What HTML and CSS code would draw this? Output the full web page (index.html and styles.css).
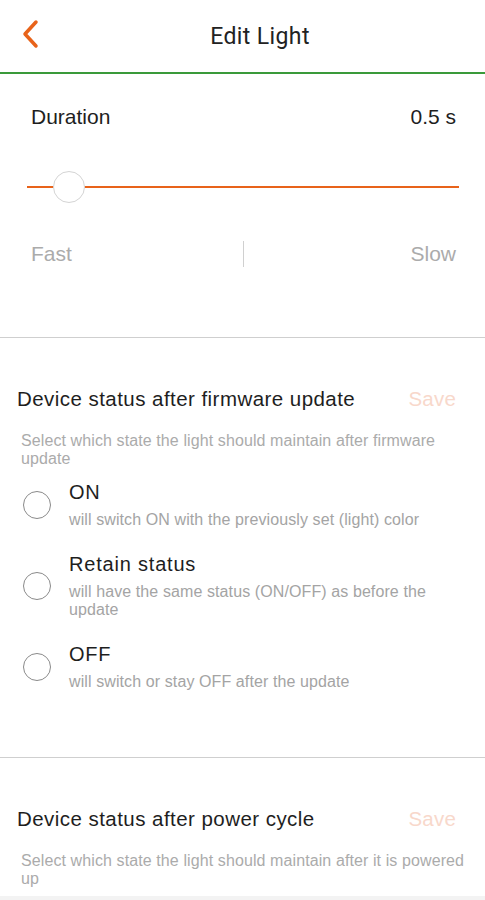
FILE: index.html
```html
<!DOCTYPE html>
<html>
	<head>
		<link rel="stylesheet" href="styles.css">
	</head>
	<body>
		<div class="header">
			<div class="back">
				<svg width="20" height="30" viewBox="0 0 20 30">
					<polyline points="15,3 4,15 15,27" fill="none" stroke="#e8631a" stroke-width="3.5" stroke-linecap="round" stroke-linejoin="round"/>
				</svg>
			</div>
			<div class="title">Edit Light</div>
		</div>

		<div class="duration">
			<div class="row">
				<span>Duration</span>
				<span>0.5 s</span>
			</div>
			<div class="slider">
				<div class="track"></div>
				<div class="thumb"></div>
			</div>
			<div class="scale">
				<span>Fast</span>
				<span class="tick"></span>
				<span class="slow">Slow</span>
			</div>
		</div>

		<div class="section">
			<div class="section-head">
				<span>Device status after firmware update</span>
				<span class="save">Save</span>
			</div>
			<div class="hint">Select which state the light should maintain after firmware update</div>
			<div class="options">
				<div class="option">
					<span class="radio"></span>
					<div class="option-text">
						<div class="option-name">ON</div>
						<div class="option-desc">will switch ON with the previously set (light) color</div>
					</div>
				</div>
				<div class="option">
					<span class="radio"></span>
					<div class="option-text">
						<div class="option-name">Retain status</div>
						<div class="option-desc">will have the same status (ON/OFF) as before the update</div>
					</div>
				</div>
				<div class="option">
					<span class="radio"></span>
					<div class="option-text">
						<div class="option-name">OFF</div>
						<div class="option-desc">will switch or stay OFF after the update</div>
					</div>
				</div>
			</div>
		</div>

		<div class="section last">
			<div class="section-head">
				<span>Device status after power cycle</span>
				<span class="save">Save</span>
			</div>
			<div class="hint">Select which state the light should maintain after it is powered up</div>
		</div>
		<div class="bottom"></div>
	</body>
</html>
```

FILE: styles.css
```css
*{
	margin: 0;
	padding: 0;
	box-sizing: border-box;
}
html,body{
	width: 100%;
	height: 100%;
	overflow: hidden;
}
body{
	font-family: "Liberation Sans", Arial, sans-serif;
	color: #1e1e1e;
	background: #fff;
}
.header{
	display: flex;
	align-items: center;
	height: 74px;
	border-bottom: 2px solid #3a9a3a;
}
.back{
	width: 50px;
	padding-left: 21px;
	padding-bottom: 5px;
	display: flex;
	align-items: center;
}
.title{
	flex: 1;
	text-align: center;
	padding-right: 15px;
	font-family: Roboto, sans-serif;
	font-size: 23px;
	letter-spacing: 0.4px;
	color: #222;
}
.duration{
	padding: 31px 29px 0 31px;
	border-bottom: 1.5px solid #cfcfcf;
	height: 264px;
	font-size: 21px;
}
.row{
	display: flex;
	justify-content: space-between;
	align-items: center;
	line-height: 24px;
}
.slider{
	position: relative;
	height: 32px;
	margin: 42px -3px 0 -4px;
	display: flex;
	align-items: center;
}
.track{
	flex: 1;
	height: 2.5px;
	background: #e8631a;
}
.thumb{
	position: absolute;
	left: 26px;
	top: 0;
	width: 32px;
	height: 32px;
	border-radius: 50%;
	background: #fff;
	border: 1.5px solid #d4d4d4;
}
.scale{
	display: grid;
	grid-template-columns: 1fr auto 1fr;
	align-items: center;
	margin-top: 38px;
	color: #ababab;
	line-height: 26px;
}
.slow{
	justify-self: end;
}
.tick{
	width: 1.5px;
	height: 26px;
	background: #d0d0d0;
}
.section{
	padding-top: 48px;
	border-bottom: 1.5px solid #cfcfcf;
	height: 420px;
}
.section.last{
	border-bottom: none;
	height: auto;
}
.section-head{
	display: flex;
	justify-content: space-between;
	padding: 0 29px 0 17px;
	font-size: 20.5px;
	letter-spacing: 0.45px;
	line-height: 26px;
}
.save{
	color: #f8d8cb;
	letter-spacing: 0.2px;
}
.hint{
	margin-top: 20px;
	padding: 0 18px 0 21px;
	font-size: 16px;
	letter-spacing: 0.1px;
	line-height: 18px;
	color: #ababab;
}
.options{
	margin-top: 13px;
	display: flex;
	flex-direction: column;
	gap: 24px;
}
.option{
	display: flex;
	align-items: center;
	padding: 0 40px 0 23px;
}
.radio{
	flex: none;
	width: 28px;
	height: 28px;
	border-radius: 50%;
	border: 1.5px solid #8a8a8a;
	margin-right: 18px;
}
.option-name{
	font-size: 20px;
	letter-spacing: 0.8px;
	line-height: 22px;
	margin-bottom: 8px;
}
.option-desc{
	font-size: 16px;
	letter-spacing: 0.1px;
	line-height: 18px;
	color: #a4a4a4;
}
.bottom{
	margin-top: 8px;
	height: 4px;
	background: #f3f3f3;
}
```
